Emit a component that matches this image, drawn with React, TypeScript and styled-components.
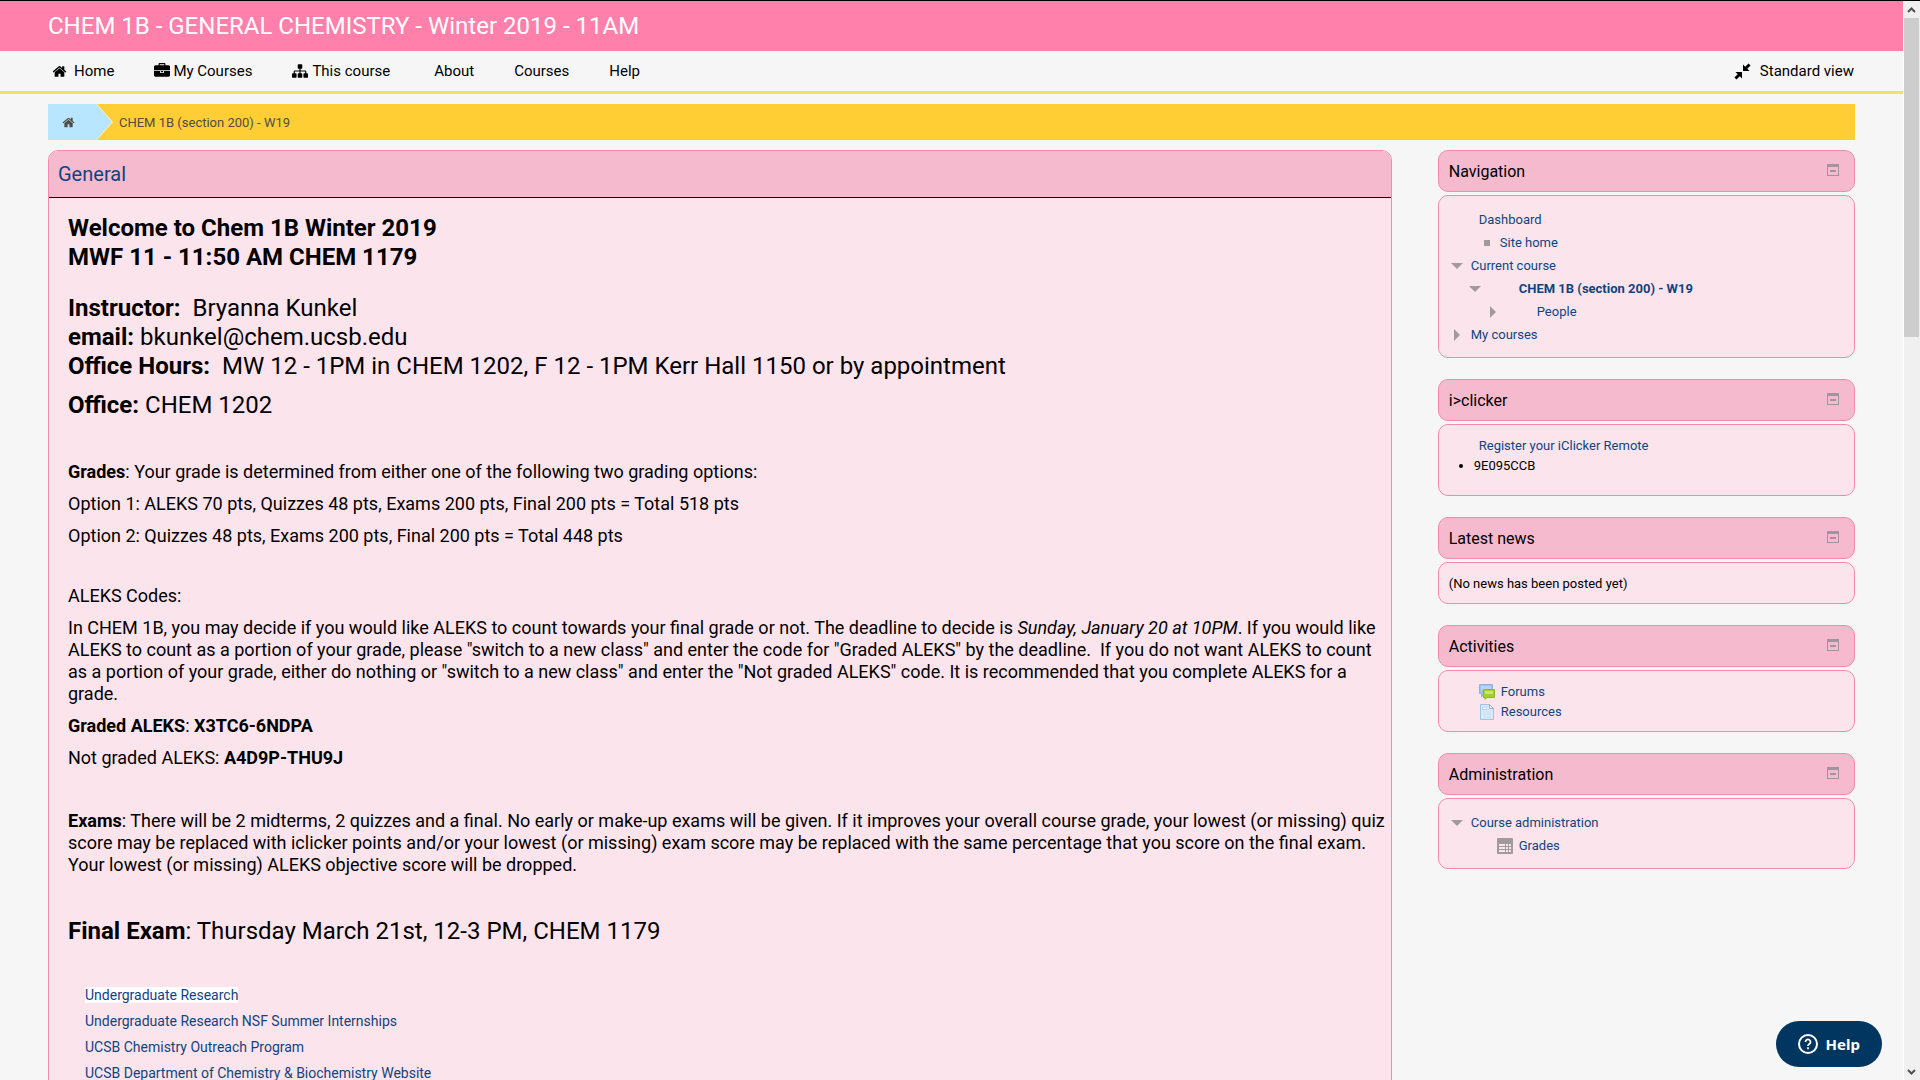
import React from "react";
import styled, { createGlobalStyle, css } from "styled-components";

const link = "#0f4480";

const GlobalStyle = createGlobalStyle`
  *, *::before, *::after { box-sizing: border-box; }
  body {
    margin: 0;
    background: #f6f6f6;
    color: #000;
    font: 13px/20px Roboto, "Liberation Sans", sans-serif;
  }
  a { color: inherit; text-decoration: none; }
  button { font: inherit; color: inherit; border: 0; background: none; padding: 0; cursor: pointer; }
  h1, h2, p, ul { margin: 0; padding: 0; font-weight: 400; }
  ul { list-style: none; }
  svg { display: block; flex: none; }
`;

const Screen = styled.div`
  display: flex;
  height: 100vh;
  overflow: hidden;
  border-top: 1px solid #000;
`;

const Page = styled.div`
  flex: 1;
  min-width: 0;
  overflow: hidden;
`;

const Header = styled.header`
  padding: 10px 48px;
  background: #ff80ab;
  color: #fff;
`;

const CourseTitle = styled.h1`
  font-size: 24px;
  line-height: 30px;
`;

const MenuBar = styled.nav`
  display: flex;
  align-items: center;
  justify-content: space-between;
  height: 43px;
  padding: 0 49px 0 52px;
  border-bottom: 3px solid #fbd975;
  font-size: 15px;
`;

const MenuList = styled.ul`
  display: flex;
  align-items: center;
  gap: 40px;
`;

const MenuLink = styled.a<{ $gap?: number; $lead?: number }>`
  display: flex;
  align-items: center;
  gap: ${(p) => p.$gap ?? 4}px;
  padding-left: ${(p) => p.$lead ?? 0}px;
`;

const Breadcrumb = styled.nav`
  display: flex;
  height: 36px;
  margin: 10px 48px;
  background: #ffcd34;
  color: #4f4d45;
`;

const CrumbHome = styled.a`
  display: flex;
  align-items: center;
  width: 64px;
  padding-left: 14px;
  background: #b8e5ff;
  clip-path: polygon(0 0, 48px 0, 100% 50%, 48px 100%, 0 100%);
`;

const CrumbEdge = styled.span`
  display: flex;
  padding-right: 1px;
  background: #fff1c2;
  clip-path: polygon(0 0, 49px 0, 100% 50%, 49px 100%, 0 100%);
`;

const CrumbLink = styled.a`
  padding: 9px 0 0 6px;
  line-height: 20px;
`;

const Columns = styled.div`
  display: grid;
  grid-template-columns: repeat(12, minmax(0, 1fr));
  column-gap: 46px;
  align-items: start;
  padding: 0 48px;
`;

const Section = styled.main`
  grid-column: span 9;
  border: 1px solid #f28cae;
  border-radius: 10px;
  background: #fce4ec;
  overflow: hidden;
`;

const SectionTitle = styled.h2`
  padding: 8px 9px;
  border-bottom: 1px solid #000;
  background: #f6bacf;
  color: ${link};
  font-size: 20px;
  line-height: 30px;
`;

const Summary = styled.div`
  padding: 16px 0 40px 19px;
`;

const spaces = { none: 0, normal: 10, medium: 22, large: 38, wide: 41 };

const Para = styled.p<{ $large?: boolean; $space?: keyof typeof spaces }>`
  margin-top: ${(p) => spaces[p.$space ?? "normal"]}px;
  font-size: 18px;
  line-height: 22px;
  ${(p) =>
    p.$large &&
    css`
      font-size: 24px;
      line-height: 29px;
    `}
`;

const LinkList = styled.ul`
  margin-top: 36px;
  padding-left: 17px;
  color: ${link};
  font-size: 14px;
`;

const LinkItem = styled.li<{ $lit?: boolean }>`
  padding: 3px 0;
  a {
    background: ${(p) => (p.$lit ? "#fff" : "transparent")};
  }
`;

const Aside = styled.aside`
  grid-column: span 3;
  display: grid;
  gap: 21px;
`;

const Block = styled.section`
  display: grid;
  gap: 3px;
`;

const BlockHead = styled.div`
  display: flex;
  align-items: center;
  justify-content: space-between;
  height: 42px;
  padding: 2px 15px 0 10px;
  border: 1px solid #f28cae;
  border-radius: 10px;
  background: #f6bacf;
`;

const BlockTitle = styled.h2`
  font-size: 16px;
  line-height: 20px;
`;

const CollapseButton = styled.button`
  padding-bottom: 4px;
`;

const BlockBody = styled.div<{ $bottom?: number; $top?: number }>`
  padding: ${(p) => p.$top ?? 11}px 10px ${(p) => p.$bottom ?? 9}px;
  border: 1px solid #f28cae;
  border-radius: 10px;
  background: #fce4ec;
`;

const Row = styled.li<{ $indent?: number; $tall?: boolean; $gap?: number; $current?: boolean }>`
  display: flex;
  align-items: center;
  gap: ${(p) => p.$gap ?? 8}px;
  height: ${(p) => (p.$tall ? 23 : 20)}px;
  padding-left: ${(p) => p.$indent ?? 0}px;
  color: ${link};
  font-weight: ${(p) => (p.$current ? 700 : 400)};
`;

const BulletList = styled.ul`
  list-style: disc;
  padding-left: 25px;
`;

const Marker = styled.span`
  width: 6px;
  height: 6px;
  background: #a09a9d;
`;

const HelpButton = styled.button`
  position: fixed;
  right: 38px;
  bottom: 13px;
  display: flex;
  align-items: center;
  gap: 8px;
  height: 46px;
  padding: 0 22px;
  border-radius: 23px;
  background: #003660;
  color: #fff;
  font: 700 15px/20px "Noto Sans", sans-serif;
`;

const ScrollTrack = styled.div`
  display: flex;
  flex-direction: column;
  width: 17px;
  padding-right: 1px;
  border-left: 1px solid #fff;
  background: #f0f0f0;
`;

const ScrollButton = styled.button`
  display: grid;
  place-items: center;
  height: 17px;
`;

const ScrollThumb = styled.div`
  flex: 11;
  background: #cdcdcd;
`;

const ScrollRest = styled.div`
  flex: 25;
`;

const paths = {
  home: "M1472 992v480q0 26-19 45t-45 19h-384v-384h-256v384h-384q-26 0-45-19t-19-45v-480q0-1 .5-3t.5-3l575-474 575 474q1 2 1 6zm223-69l-62 74q-8 9-21 11h-3q-13 0-21-7l-692-577-692 577q-12 8-24 7-13-2-21-11l-62-74q-8-10-7-23.500t11-21.500l719-599q32-26 76-26t76 26l244 204v-195q0-14 9-23t23-9h192q14 0 23 9t9 23v408l219 182q10 8 11 21.500t-7 23.500z",
  briefcase:
    "M640 256h512v-128h-512v128zm1152 640v480q0 66-47 113t-113 47h-1472q-66 0-113-47t-47-113v-480h672v160q0 26 19 45t45 19h320q26 0 45-19t19-45v-160h672zm-768 0v128h-256v-128h256zm768-480v384h-1792v-384q0-66 47-113t113-47h352v-160q0-40 28-68t68-28h576q40 0 68 28t28 68v160h352q66 0 113 47t47 113z",
  sitemap:
    "M1792 1248v320q0 40-28 68t-68 28h-320q-40 0-68-28t-28-68v-320q0-40 28-68t68-28h96v-192h-512v192h96q40 0 68 28t28 68v320q0 40-28 68t-68 28h-320q-40 0-68-28t-28-68v-320q0-40 28-68t68-28h96v-192h-512v192h96q40 0 68 28t28 68v320q0 40-28 68t-68 28h-320q-40 0-68-28t-28-68v-320q0-40 28-68t68-28h96v-192q0-52 38-90t90-38h512v-192h-96q-40 0-68-28t-28-68v-320q0-40 28-68t68-28h320q40 0 68 28t28 68v320q0 40-28 68t-68 28h-96v192h512q52 0 90 38t38 90v192h96q40 0 68 28t28 68z",
};

function Glyph({ name, size }: { name: keyof typeof paths; size: number }) {
  return (
    <svg width={size} height={size} viewBox="0 0 1792 1792" fill="currentColor" aria-hidden="true">
      <path d={paths[name]} />
    </svg>
  );
}

function CompressIcon() {
  return (
    <svg width="17" height="17" viewBox="0 0 17 17" aria-hidden="true">
      <path d="M9 8V1.500L11.200 3.700 14.500 0.400 16.600 2.500 13.300 5.800 15.500 8zM8 9V15.500L5.800 13.300 2.500 16.600 0.400 14.500 3.700 11.200 1.500 9z" />
    </svg>
  );
}

function Arrow({ open }: { open?: boolean }) {
  return (
    <svg width="12" height="12" viewBox="0 0 12 12" fill="#a09a9d" aria-hidden="true">
      <path d={open ? "M0 3h12L6 9z" : "M3 0v12l6-6z"} />
    </svg>
  );
}

function CollapseIcon() {
  return (
    <svg width="12" height="12" viewBox="0 0 12 12" fill="#a3949b" aria-hidden="true">
      <path fillRule="evenodd" d="M0 0h12v12H0zM1 3v8h10V3z" />
      <path d="M3 6h6v2H3z" />
    </svg>
  );
}

function ForumIcon() {
  return (
    <svg width="16" height="16" viewBox="0 0 16 16" aria-hidden="true">
      <path d="M0.500 0.500h13v9H5L2.500 13V9.500h-2z" fill="#9fc3ee" stroke="#8db4e6" />
      <path d="M2 2h10v4H2z" fill="#b9d4f4" />
      <path d="M5 5.500h10.500v8H8L6 15.500v-2H4.500v-8z" fill="#a2d12c" stroke="#8cba2c" />
      <path d="M6 7h8v3H6z" fill="#c9e86a" />
    </svg>
  );
}

function ResourceIcon() {
  return (
    <svg width="16" height="16" viewBox="0 0 16 16" aria-hidden="true">
      <path d="M1.500 0.500h9l4 4v11h-13z" fill="#d9ebfb" stroke="#9dc3ee" />
      <path d="M10.500 0.500v4h4z" fill="#fff" stroke="#86b3e8" />
      <path d="M3.500 3h4.500v2.500H3.500z" fill="#fff" stroke="#b3d2f2" />
      <path d="M4 8h8M4 10.500h8M4 13h8" stroke="#c3ddf6" />
    </svg>
  );
}

function GradesIcon() {
  return (
    <svg width="16" height="16" viewBox="0 0 16 16" aria-hidden="true">
      <rect width="16" height="16" rx="1" fill="#a09a9d" />
      <path
        d="M2 6h6v2H2zM9 6h2v2H9zM12 6h2v2h-2zM2 9h6v2H2zM9 9h2v2H9zM12 9h2v2h-2zM2 12h6v2H2zM9 12h2v2H9zM12 12h2v2h-2z"
        fill="#fce4ec"
      />
    </svg>
  );
}

function Chevron({ down }: { down?: boolean }) {
  return (
    <svg width="9" height="6" viewBox="0 0 9 6" fill="none" stroke="#505050" strokeWidth="2" aria-hidden="true">
      <path d={down ? "M1 1l3.500 3.500L8 1" : "M1 5l3.500-3.500L8 5"} />
    </svg>
  );
}

function SideBlock(props: { title: string; top?: number; bottom?: number; children: React.ReactNode }) {
  return (
    <Block>
      <BlockHead>
        <BlockTitle>{props.title}</BlockTitle>
        <CollapseButton aria-label={`Hide ${props.title} block`}>
          <CollapseIcon />
        </CollapseButton>
      </BlockHead>
      <BlockBody $top={props.top} $bottom={props.bottom}>
        {props.children}
      </BlockBody>
    </Block>
  );
}

const courseLinks = [
  "Undergraduate Research",
  "Undergraduate Research NSF Summer Internships",
  "UCSB Chemistry Outreach Program",
  "UCSB Department of Chemistry & Biochemistry Website",
];

export default function App() {
  return (
    <>
      <GlobalStyle />
      <Screen>
        <Page>
          <Header>
            <CourseTitle>CHEM 1B - GENERAL CHEMISTRY - Winter 2019 - 11AM</CourseTitle>
          </Header>
          <MenuBar aria-label="Main menu">
            <MenuList>
              <li>
                <MenuLink href="#home" $gap={7}>
                  <Glyph name="home" size={15} />
                  Home
                </MenuLink>
              </li>
              <li>
                <MenuLink href="#my-courses" $gap={3}>
                  <Glyph name="briefcase" size={16} />
                  My Courses
                </MenuLink>
              </li>
              <li>
                <MenuLink href="#this-course">
                  <Glyph name="sitemap" size={16} />
                  This course
                </MenuLink>
              </li>
              <li>
                <MenuLink href="#about" $lead={4}>
                  About
                </MenuLink>
              </li>
              <li>
                <MenuLink href="#courses">Courses</MenuLink>
              </li>
              <li>
                <MenuLink href="#help">Help</MenuLink>
              </li>
            </MenuList>
            <MenuLink href="#standard" $gap={9}>
              <CompressIcon />
              Standard view
            </MenuLink>
          </MenuBar>
          <Breadcrumb aria-label="Breadcrumb">
            <CrumbEdge>
              <CrumbHome href="#home" aria-label="Home">
                <Glyph name="home" size={13} />
              </CrumbHome>
            </CrumbEdge>
            <CrumbLink href="#course">CHEM 1B (section 200) - W19</CrumbLink>
          </Breadcrumb>
          <Columns>
            <Section>
              <SectionTitle>
                <a href="#general">General</a>
              </SectionTitle>
              <Summary>
                <Para $large $space="none">
                  <b>
                    Welcome to Chem 1B Winter 2019
                    <br />
                    MWF 11 - 11:50 AM CHEM 1179
                  </b>
                </Para>
                <Para $large $space="medium">
                  <b>Instructor:</b>&nbsp; Bryanna Kunkel
                  <br />
                  <b>email:</b> bkunkel@chem.ucsb.edu
                  <br />
                  <b>Office Hours:</b>&nbsp; MW 12 - 1PM in CHEM 1202, F 12 - 1PM Kerr Hall 1150 or by appointment
                </Para>
                <Para $large>
                  <b>Office:</b> CHEM 1202
                </Para>
                <Para $space="wide">
                  <b>Grades</b>: Your grade is determined from either one of the following two grading options:
                </Para>
                <Para>Option 1: ALEKS 70 pts, Quizzes 48 pts, Exams 200 pts, Final 200 pts = Total 518 pts</Para>
                <Para>Option 2: Quizzes 48 pts, Exams 200 pts, Final 200 pts = Total 448 pts</Para>
                <Para $space="large">ALEKS Codes:</Para>
                <Para>
                  In CHEM 1B, you may decide if you would like ALEKS to count towards your final grade or not. The
                  deadline to decide is <i>Sunday, January 20 at 10PM</i>. If you would like ALEKS to count as a portion
                  of your grade, please "switch to a new class" and enter the code for "Graded ALEKS" by the
                  deadline.&nbsp; If you do not want ALEKS to count as a portion of your grade, either do nothing or
                  "switch to a new class" and enter the "Not graded ALEKS" code. It is recommended that you complete
                  ALEKS for a grade.
                </Para>
                <Para>
                  <b>Graded ALEKS</b>: <b>X3TC6-6NDPA</b>
                </Para>
                <Para>
                  Not graded ALEKS: <b>A4D9P-THU9J</b>
                </Para>
                <Para $space="wide">
                  <b>Exams</b>: There will be 2 midterms, 2 quizzes and a final. No early or make-up exams will be given.
                  If it improves your overall course grade, your lowest (or missing) quiz score may be replaced with
                  iclicker points and/or your lowest (or missing) exam score may be replaced with the same percentage
                  that you score on the final exam. Your lowest (or missing) ALEKS objective score will be dropped.
                </Para>
                <Para $large $space="wide">
                  <b>Final Exam</b>: Thursday March 21st, 12-3 PM, CHEM 1179
                </Para>
                <LinkList>
                  {courseLinks.map((text, i) => (
                    <LinkItem key={text} $lit={i === 0}>
                      <a href="#link">{text}</a>
                    </LinkItem>
                  ))}
                </LinkList>
              </Summary>
            </Section>
            <Aside>
              <SideBlock title="Navigation" top={12} bottom={11}>
                <ul>
                  <Row $tall $indent={30}>
                    <a href="#dashboard">Dashboard</a>
                  </Row>
                  <Row $tall $indent={35} $gap={10}>
                    <Marker />
                    <a href="#site">Site home</a>
                  </Row>
                  <Row $tall $indent={2}>
                    <Arrow open />
                    <a href="#current">Current course</a>
                  </Row>
                  <Row $tall $indent={20} $gap={38} $current>
                    <Arrow open />
                    <a href="#course">CHEM 1B (section 200) - W19</a>
                  </Row>
                  <Row $tall $indent={38} $gap={38}>
                    <Arrow />
                    <a href="#people">People</a>
                  </Row>
                  <Row $tall $indent={2}>
                    <Arrow />
                    <a href="#my-courses">My courses</a>
                  </Row>
                </ul>
              </SideBlock>
              <SideBlock title="i>clicker" bottom={19}>
                <ul>
                  <Row $indent={30}>
                    <a href="#remote">Register your iClicker Remote</a>
                  </Row>
                </ul>
                <BulletList>
                  <li>9E095CCB</li>
                </BulletList>
              </SideBlock>
              <SideBlock title="Latest news">(No news has been posted yet)</SideBlock>
              <SideBlock title="Activities">
                <ul>
                  <Row $indent={30} $gap={6}>
                    <ForumIcon />
                    <a href="#forums">Forums</a>
                  </Row>
                  <Row $indent={30} $gap={6}>
                    <ResourceIcon />
                    <a href="#resources">Resources</a>
                  </Row>
                </ul>
              </SideBlock>
              <SideBlock title="Administration" top={12} bottom={11}>
                <ul>
                  <Row $tall $indent={2}>
                    <Arrow open />
                    <a href="#admin">Course administration</a>
                  </Row>
                  <Row $tall $indent={48} $gap={6}>
                    <GradesIcon />
                    <a href="#grades">Grades</a>
                  </Row>
                </ul>
              </SideBlock>
            </Aside>
          </Columns>
        </Page>
        <ScrollTrack>
          <ScrollButton aria-label="Scroll up">
            <Chevron />
          </ScrollButton>
          <ScrollThumb />
          <ScrollRest />
          <ScrollButton aria-label="Scroll down">
            <Chevron down />
          </ScrollButton>
        </ScrollTrack>
        <HelpButton>
          <svg width="20" height="20" viewBox="0 0 20 20" fill="none" stroke="#fff" strokeWidth="2" aria-hidden="true">
            <circle cx="10" cy="10" r="9" />
            <path d="M7.500 8a2.500 2.500 0 1 1 3.800 2.100C10.400 10.700 10 11 10 12M10 13.300v2" strokeWidth="1.800" />
          </svg>
          Help
        </HelpButton>
      </Screen>
    </>
  );
}
